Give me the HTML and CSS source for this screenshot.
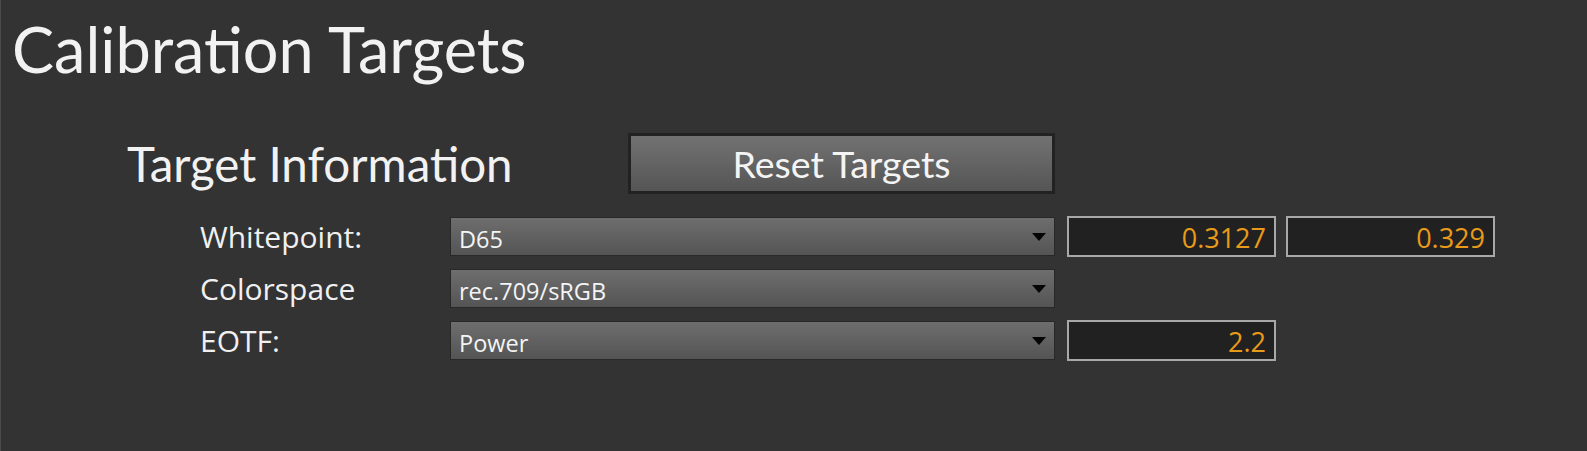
FILE: index.html
```html
<!DOCTYPE html>
<html lang="en">
<head>
  <meta charset="UTF-8" />
  <title>Calibration Targets</title>
  <link rel="stylesheet" href="styles.css">
</head>
<body>
  <div class="panel">
    <h1 class="title">Calibration Targets</h1>

    <div class="section">
      <div class="section-head">
        <h2 class="section-title">Target Information</h2>
        <button class="reset-btn">Reset Targets</button>
      </div>

      <div class="row">
        <label class="row-label">Whitepoint:</label>
        <div class="combo"><span>D65</span><span class="arrow"></span></div>
        <div class="field">0.3127</div>
        <div class="field">0.329</div>
      </div>

      <div class="row">
        <label class="row-label">Colorspace</label>
        <div class="combo"><span>rec.709/sRGB</span><span class="arrow"></span></div>
      </div>

      <div class="row">
        <label class="row-label">EOTF:</label>
        <div class="combo"><span>Power</span><span class="arrow"></span></div>
        <div class="field">2.2</div>
      </div>
    </div>
  </div>
</body>
</html>
```

FILE: styles.css
```css
html, body {
  margin: 0;
  height: 100%;
}
body {
  background-color: #333333;
  color: #f0f0f0;
  font-family: "Open Sans", "Noto Sans", sans-serif;
}
.panel {
  height: 100%;
  box-sizing: border-box;
  border-left: 1px solid #4a4a4a;
}
.title {
  margin: 0;
  padding: 7px 0 0 11px;
  font-family: Lato, "Open Sans", sans-serif;
  font-weight: normal;
  font-size: 63px;
  line-height: 84px;
  color: #f2f2f2;
}
.section {
  padding-left: 126px;
}
.section-head {
  display: flex;
  align-items: center;
  margin-top: 42px;
  height: 61px;
}
.section-title {
  margin: 0;
  width: 501px;
  font-family: Lato, "Open Sans", sans-serif;
  font-weight: normal;
  font-size: 47.5px;
  color: #f2f2f2;
}
.reset-btn {
  width: 427px;
  height: 61px;
  border: 3px solid #222222;
  background: linear-gradient(#727272, #555555);
  color: #f4f4f4;
  font-family: Lato, "Open Sans", sans-serif;
  font-size: 37.5px;
  padding: 0;
}
.row {
  display: flex;
  align-items: center;
  height: 41px;
  margin-top: 11px;
}
.section-head + .row {
  margin-top: 22px;
}
.row-label {
  width: 323px;
  padding-left: 73px;
  box-sizing: border-box;
  font-size: 30px;
  color: #f0f0f0;
}
.combo {
  width: 605px;
  height: 39px;
  box-sizing: border-box;
  border: 1px solid #282828;
  background: linear-gradient(#6e6e6e, #545454);
  display: flex;
  align-items: center;
  justify-content: space-between;
  padding: 5px 8px 0 8px;
  font-size: 23.5px;
  color: #f4f4f4;
}
.arrow {
  width: 0;
  height: 0;
  border-left: 7px solid transparent;
  border-right: 7px solid transparent;
  border-top: 8px solid #050505;
  margin-top: -5px;
}
.field {
  width: 209px;
  height: 41px;
  box-sizing: border-box;
  margin-left: 12px;
  border: 2px solid #a8a8a8;
  background-color: #212121;
  color: #e89a1a;
  font-size: 27px;
  text-align: right;
  padding: 2px 8px 0 0;
  line-height: 36px;
}
.field + .field {
  margin-left: 10px;
}
```
